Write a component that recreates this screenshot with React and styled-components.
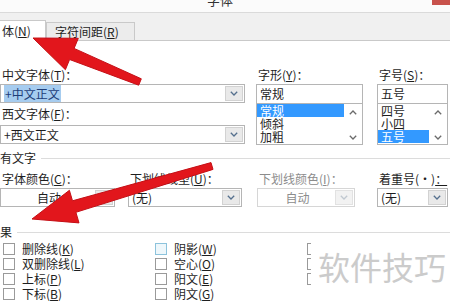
import styled, { createGlobalStyle } from "styled-components";

const GlobalStyle = createGlobalStyle`
  html, body {
    margin: 0;
    padding: 0;
    background: #fff;
  }
  body {
    width: 450px;
    height: 301px;
    overflow: hidden;
    font-family: "Noto Sans CJK SC", "Liberation Sans", sans-serif;
    font-size: 12px;
    color: #1e1e1e;
  }
`;

const Dialog = styled.div`
  position: relative;
  width: 450px;
  height: 301px;
  overflow: hidden;
  display: flex;
  flex-direction: column;
`;

const TitleBar = styled.div`
  height: 12px;
  flex-shrink: 0;
  background: #fbfbfb;
  border-bottom: 1px solid #dadada;
  display: flex;
  justify-content: space-between;
  align-items: flex-start;
  overflow: hidden;
`;

const Title = styled.div`
  margin-left: 207px;
  margin-top: -7px;
  font-size: 13px;
  line-height: 14px;
  color: #333;
`;

const CloseButton = styled.div`
  width: 18px;
  height: 5px;
  background: #c8524c;
`;

const TabStrip = styled.div`
  height: 27px;
  flex-shrink: 0;
  background: #f0f0f0;
  border-bottom: 1px solid #c9c9c9;
  display: flex;
  align-items: flex-end;
`;

const Tab = styled.div`
  box-sizing: border-box;
  width: ${(p) => p.$w}px;
  height: ${(p) => (p.$active ? 21 : 18)}px;
  margin-bottom: ${(p) => (p.$active ? -1 : 0)}px;
  padding-left: ${(p) => p.$pad}px;
  background: ${(p) => (p.$active ? "#fff" : "#ececec")};
  border: 1px solid #c9c9c9;
  border-bottom: none;
  border-left: ${(p) => (p.$active ? "none" : "1px solid #c9c9c9")};
  display: flex;
  align-items: center;
  line-height: 14px;
  position: relative;
  z-index: ${(p) => (p.$active ? 1 : 0)};
`;

const Panel = styled.div`
  flex: 1;
  background: #fff;
  padding-top: 26px;
  display: flex;
  flex-direction: column;
`;

const Row = styled.div`
  display: flex;
  align-items: flex-start;
  margin-top: ${(p) => p.$mt || 0}px;
`;

const Column = styled.div`
  display: flex;
  flex-direction: column;
  width: ${(p) => p.$w}px;
  margin-left: ${(p) => p.$ml || 0}px;
`;

const Label = styled.div`
  height: 15px;
  line-height: 15px;
  padding-left: 2px;
  margin-top: ${(p) => p.$mt || 0}px;
  color: ${(p) => (p.$muted ? "#8c8c8c" : "#1e1e1e")};
  white-space: nowrap;
`;

const Combo = styled.div`
  box-sizing: border-box;
  height: ${(p) => p.$h || 19}px;
  margin-top: ${(p) => p.$mt || 0}px;
  border: 1px solid ${(p) => (p.$disabled ? "#d6d6d6" : "#b5b5b5")};
  background: #fff;
  display: flex;
`;

const ComboText = styled.div`
  flex: 1;
  padding-left: 3px;
  line-height: 17px;
  white-space: nowrap;
  overflow: hidden;
  text-align: ${(p) => (p.$center ? "center" : "left")};
  color: ${(p) => (p.$muted ? "#8c8c8c" : "#1e1e1e")};
`;

const Selected = styled.span`
  background: #a6ccef;
  color: #1d3d78;
  padding: 0 1px;
`;

const ArrowBox = styled.div`
  width: 16px;
  margin: 1px;
  background: ${(p) => (p.$disabled ? "#f2f2f2" : "#e9e9e9")};
  border: 1px solid ${(p) => (p.$disabled ? "#e2e2e2" : "#d2d2d2")};
  display: flex;
  align-items: center;
  justify-content: center;
`;

const ListBox = styled.div`
  box-sizing: border-box;
  height: 41px;
  border: 1px solid #b5b5b5;
  border-top: none;
  display: flex;
  overflow: hidden;
`;

const Items = styled.div`
  flex: 1;
  display: flex;
  flex-direction: column;
`;

const Item = styled.div`
  height: 13px;
  line-height: 13px;
  padding-left: 3px;
  background: ${(p) => (p.$selected ? "#3399ff" : "transparent")};
  color: ${(p) => (p.$selected ? "#fff" : "#1e1e1e")};
`;

const ScrollCol = styled.div`
  width: 18px;
  display: flex;
  flex-direction: column;
  justify-content: space-between;
  align-items: center;
  padding: 6px 0 4px;
`;

const SectionHeader = styled.div`
  display: flex;
  align-items: center;
  height: 14px;
  line-height: 14px;
  margin-top: ${(p) => p.$mt}px;
`;

const Rule = styled.div`
  flex: 1;
  height: 1px;
  margin-left: 5px;
  background: #dcdcdc;
`;

const CheckGrid = styled.div`
  display: grid;
  grid-template-columns: 152px 152px 1fr;
  grid-auto-rows: 15px;
  padding-left: 3px;
  margin-top: 2px;
`;

const Check = styled.div`
  display: flex;
  align-items: center;
  gap: 7px;
  white-space: nowrap;
  line-height: 15px;
`;

const Box = styled.div`
  box-sizing: border-box;
  width: 12px;
  height: 12px;
  border: 1px solid ${(p) => (p.$focus ? "#8cc3dc" : "#9a9a9a")};
  background: ${(p) => (p.$focus ? "#eef7fb" : "#fff")};
`;

const Watermark = styled.div`
  position: absolute;
  left: 311px;
  top: 236px;
  right: 0;
  bottom: 0;
  background: #fff;
  padding: 14px 0 0 7px;
  font-size: 32px;
  line-height: 32px;
  color: #cbcbcb;
  z-index: 3;
  white-space: nowrap;
`;

const Overlay = styled.svg`
  position: absolute;
  left: 0;
  top: 0;
  z-index: 5;
  pointer-events: none;
`;

function Chevron({ up, color = "#55708e" }) {
  return (
    <svg width="8" height="5" viewBox="0 0 8 5">
      <polyline
        points={up ? "0.8,4.2 4,1 7.2,4.2" : "0.8,0.8 4,4 7.2,0.8"}
        fill="none"
        stroke={color}
        strokeWidth="1.3"
      />
    </svg>
  );
}

function arrowPoints([tx, ty], [hx, hy], headL, headW, neckW, tailW) {
  const dx = hx - tx;
  const dy = hy - ty;
  const len = Math.hypot(dx, dy);
  const ux = dx / len;
  const uy = dy / len;
  const px = -uy;
  const py = ux;
  const bx = hx - ux * headL;
  const by = hy - uy * headL;
  const pts = [
    [tx + (px * tailW) / 2, ty + (py * tailW) / 2],
    [bx + (px * neckW) / 2, by + (py * neckW) / 2],
    [bx + (px * headW) / 2, by + (py * headW) / 2],
    [hx, hy],
    [bx - (px * headW) / 2, by - (py * headW) / 2],
    [bx - (px * neckW) / 2, by - (py * neckW) / 2],
    [tx - (px * tailW) / 2, ty - (py * tailW) / 2],
  ];
  return pts.map((p) => p.map((v) => v.toFixed(1)).join(",")).join(" ");
}

function Arrows() {
  return (
    <Overlay width="450" height="301" viewBox="0 0 450 301">
      <defs>
        <filter id="soft" x="-10%" y="-10%" width="120%" height="120%">
          <feGaussianBlur stdDeviation="0.7" />
        </filter>
      </defs>
      <g filter="url(#soft)" fill="#e2181d" stroke="#c40f14" strokeWidth="1">
        <polygon points={arrowPoints([140, 82], [33, 38], 42, 34, 12, 7)} />
        <polygon points={arrowPoints([212, 166], [32, 219], 44, 34, 12, 7)} />
      </g>
    </Overlay>
  );
}

function ComboField({ text, center, disabled, selected, mt }) {
  return (
    <Combo $mt={mt} $disabled={disabled}>
      <ComboText $center={center} $muted={disabled}>
        {selected ? <Selected>{text}</Selected> : text}
      </ComboText>
      <ArrowBox $disabled={disabled}>
        <Chevron color={disabled ? "#c0c8d0" : "#55708e"} />
      </ArrowBox>
    </Combo>
  );
}

function PickList({ value, items, selectedIndex }) {
  return (
    <>
      <Combo $h={20} $mt={2}>
        <ComboText>{value}</ComboText>
      </Combo>
      <ListBox>
        <Items>
          {items.map((it, i) => (
            <Item key={it} $selected={i === selectedIndex}>
              {it}
            </Item>
          ))}
        </Items>
        <ScrollCol>
          <Chevron up color="#6a6a6a" />
          <Chevron color="#6a6a6a" />
        </ScrollCol>
      </ListBox>
    </>
  );
}

// third column lies under the watermark: only the boxes' left edges show
const checks = [
  ["删除线", "K"],
  ["阴影", "W", true],
  [null],
  ["双删除线", "L"],
  ["空心", "O"],
  [null],
  ["上标", "P"],
  ["阳文", "E"],
  [null],
  ["下标", "B"],
  ["阴文", "G"],
];

export default function App() {
  return (
    <>
      <GlobalStyle />
      <Dialog>
        <TitleBar>
          <Title>字体</Title>
          <CloseButton />
        </TitleBar>
        <TabStrip>
          <Tab $active $w={46} $pad={2}>
            体(<u>N</u>)
          </Tab>
          <Tab $w={89} $pad={8}>
            字符间距(<u>R</u>)
          </Tab>
        </TabStrip>
        <Panel>
          <Row>
            <Column $w={245}>
              <Label>
                中文字体(<u>T</u>)：
              </Label>
              <ComboField text="+中文正文" selected mt={2} />
              <Label $mt={3}>
                西文字体(<u>F</u>)：
              </Label>
              <ComboField text="+西文正文" mt={4} />
            </Column>
            <Column $w={107} $ml={11}>
              <Label>
                字形(<u>Y</u>)：
              </Label>
              <PickList value="常规" items={["常规", "倾斜", "加粗"]} selectedIndex={0} />
            </Column>
            <Column $w={71} $ml={14}>
              <Label>
                字号(<u>S</u>)：
              </Label>
              <PickList value="五号" items={["四号", "小四", "五号"]} selectedIndex={2} />
            </Column>
          </Row>

          <SectionHeader $mt={6}>
            有文字
            <Rule />
          </SectionHeader>
          <Row $mt={6}>
            <Column $w={115}>
              <Label>
                字体颜色(<u>C</u>)：
              </Label>
              <ComboField text="自动" center mt={2} />
            </Column>
            <Column $w={114} $ml={13}>
              <Label>
                下划线线型(<u>U</u>)：
              </Label>
              <ComboField text="(无)" mt={2} />
            </Column>
            <Column $w={98} $ml={15}>
              <Label $muted>
                下划线颜色(<u>I</u>)：
              </Label>
              <ComboField text="自动" center disabled mt={2} />
            </Column>
            <Column $w={71} $ml={22}>
              <Label>
                着重号(·)<u>：</u>
              </Label>
              <ComboField text="(无)" mt={2} />
            </Column>
          </Row>

          <SectionHeader $mt={18}>
            果
            <Rule />
          </SectionHeader>
          <CheckGrid>
            {checks.map(([label, key, focus], i) => (
              <Check key={i}>
                <Box $focus={focus} />
                {label && (
                  <span>
                    {label}(<u>{key}</u>)
                  </span>
                )}
              </Check>
            ))}
          </CheckGrid>
        </Panel>
        <Watermark>软件技巧</Watermark>
        <Arrows />
      </Dialog>
    </>
  );
}
